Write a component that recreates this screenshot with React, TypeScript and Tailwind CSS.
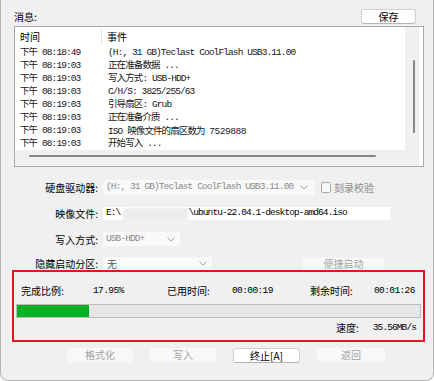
const mono = "font-['Liberation_Mono','Noto_Sans_CJK_SC',monospace]";

type LogRow = { time: string; event: React.ReactNode };

const ROWS: LogRow[] = [
  { time: "08:18:49", event: "(H:, 31 GB)Teclast CoolFlash USB3.11.00" },
  { time: "08:19:03", event: "正在准备数据 ..." },
  { time: "08:19:03", event: "写入方式: USB-HDD+" },
  { time: "08:19:03", event: "C/H/S: 3825/255/63" },
  { time: "08:19:03", event: "引导扇区: Grub" },
  { time: "08:19:03", event: "正在准备介质 ..." },
  {
    time: "08:19:03",
    event: (
      <>
        ISO 映像文件的扇区数为{" "}
        <span className="font-['Liberation_Sans',sans-serif] tracking-normal">7529888</span>
      </>
    ),
  },
  { time: "08:19:03", event: "开始写入 ..." },
];

function Chevron() {
  return (
    <svg width="8" height="5" viewBox="0 0 8 5" className="shrink-0">
      <polyline points="0.5,0.5 4,4 7.5,0.5" fill="none" stroke="#a0a0a0" strokeWidth="1" />
    </svg>
  );
}

function Label({ children }: { children: React.ReactNode }) {
  return <div className="w-[97px] shrink-0 text-right leading-[13px]">{children}</div>;
}

function Btn({ label, enabled, className = "" }: { label: string; enabled?: boolean; className?: string }) {
  return (
    <button
      type="button"
      className={`flex items-center justify-center rounded-[3px] leading-[12px] ${
        enabled
          ? "border border-[#d0d0d0] border-b-[#b5b5b5] bg-white text-black"
          : "bg-[#f8f8f8] text-[#a3a3a3]"
      } ${className}`}
    >
      {label}
    </button>
  );
}

export default function App() {
  return (
    <div className="h-[381px] w-[434px] overflow-hidden rounded-b-[8px] border-x border-b border-[#b4b4b4] bg-[#f0f0f0] font-['Noto_Sans_CJK_SC',sans-serif] text-[10px] text-black">
      {/* message header */}
      <div className="mt-[9px] flex h-[15px] items-center justify-between pl-[13px] pr-[17px]">
        <span className="leading-[12px]">消息:</span>
        <Btn label="保存" enabled className="h-[15px] w-[55px]" />
      </div>

      {/* log list */}
      <div className="ml-[13px] mt-[2px] flex h-[141px] w-[410px] border border-[#a9a9a9] bg-white">
        <div className="flex min-w-0 flex-1 flex-col">
          <div className="flex h-[19px] shrink-0 items-center">
            <div className="flex h-[17px] w-[87px] items-center border-r border-[#e3e3e3] pl-[5px] leading-[12px]">时间</div>
            <div className="pl-[5px] leading-[12px]">事件</div>
          </div>
          <div className={`flex-1 overflow-hidden text-[9.5px] tracking-[-0.9px] text-[#161616] ${mono}`}>
            {ROWS.map((row, i) => (
              <div key={i} className="flex h-[13px] items-center whitespace-nowrap leading-[13px]">
                <div className="w-[87px] shrink-0 pl-[5px]">下午 {row.time}</div>
                <div className="pl-[6px]">{row.event}</div>
              </div>
            ))}
          </div>
          <div className="relative h-[16px] shrink-0 bg-[#f0f0f0]">
            <div className="absolute left-[14px] top-[5px] h-[2px] w-[347px] rounded-full bg-[#868686]" />
          </div>
        </div>
        <div className="relative w-[14px] shrink-0 bg-[#f0f0f0]">
          <div className="absolute left-[8px] top-[33px] h-[73px] w-[2px] rounded-full bg-[#868686]" />
        </div>
        <div className="w-[4px] shrink-0" />
      </div>

      {/* settings */}
      <div className="mt-[13px] flex h-[15px] items-center gap-[5px]">
        <Label>硬盘驱动器:</Label>
        <div className={`flex h-[15px] w-[211px] items-center justify-between bg-[#f9f9f9] pl-[3px] pr-[6px] text-[9.5px] tracking-[-0.9px] text-[#8a8a8a] ${mono}`}>
          <span className="whitespace-nowrap">(H:, 31 GB)Teclast CoolFlash USB3.11.00</span>
          <Chevron />
        </div>
        <div className="ml-[2px] flex items-center gap-[3px] text-[#8c8c8c]">
          <span className="h-[11px] w-[10px] rounded-[2px] border border-[#a8a8a8] bg-[#f8f8f8]" />
          <span className="leading-[12px]">刻录校验</span>
        </div>
      </div>

      <div className="mt-[12px] flex h-[13px] items-center gap-[5px]">
        <Label>映像文件:</Label>
        <div className={`flex h-[13px] w-[287px] items-center bg-white pl-[3px] text-[9.5px] tracking-[-0.9px] ${mono}`}>
          <span>E:\</span>
          <span className="ml-[3px] h-[12px] w-[65px] bg-[#ececec] blur-[1px]" />
          <span className="whitespace-nowrap">\ubuntu-22.04.1-desktop-amd64.iso</span>
        </div>
      </div>

      <div className="mt-[12px] flex h-[14px] items-center gap-[5px]">
        <Label>写入方式:</Label>
        <div className={`flex h-[14px] w-[77px] items-center justify-between bg-[#f9f9f9] pl-[3px] pr-[5px] text-[9.5px] tracking-[-0.9px] text-[#8a8a8a] ${mono}`}>
          <span>USB-HDD+</span>
          <Chevron />
        </div>
      </div>

      <div className="mt-[11px] flex h-[13px] items-center gap-[5px]">
        <Label>隐藏启动分区:</Label>
        <div className="flex h-[13px] w-[109px] items-center justify-between bg-[#f9f9f9] pl-[4px] pr-[5px] text-[#5a5a5a]">
          <span className="leading-[12px]">无</span>
          <Chevron />
        </div>
        <Btn label="便捷启动" className="ml-[86px] h-[12px] w-[81px]" />
      </div>

      {/* progress */}
      <div className="ml-[11px] h-[72px] w-[413px] border-2 border-[#e5141f]">
        <div className="mt-[12px] flex h-[14px] items-center whitespace-nowrap leading-[12px]">
          <span className="w-[79px] shrink-0 pl-[7px]">完成比例:</span>
          <span className={`w-[74px] shrink-0 text-[9.5px] tracking-[-0.6px] ${mono}`}>17.95%</span>
          <span className="w-[65px] shrink-0">已用时间:</span>
          <span className={`w-[78px] shrink-0 text-[9.5px] tracking-[-0.6px] ${mono}`}>00:00:19</span>
          <span className="w-[64px] shrink-0">剩余时间:</span>
          <span className={`text-[9.5px] tracking-[-0.6px] ${mono}`}>00:01:26</span>
        </div>
        <div className="mx-[2px] mt-[6px] h-[14px] border border-[#bcbcbc] bg-[#e6e6e6]">
          <div className="h-full bg-[#06b025]" style={{ width: "17.95%" }} />
        </div>
        <div className="mt-[3px] flex h-[14px] items-center justify-end gap-[14px] pr-[7px] leading-[12px]">
          <span>速度:</span>
          <span className={`text-[9.5px] tracking-[-0.9px] ${mono}`}>35.56MB/s</span>
        </div>
      </div>

      {/* actions */}
      <div className="mt-[6px] flex gap-[17px] pl-[66px]">
        <Btn label="格式化" className="h-[14px] w-[66px]" />
        <Btn label="写入" className="h-[14px] w-[66px]" />
        <Btn label="终止[A]" enabled className="h-[15px] w-[67px]" />
        <Btn label="返回" className="h-[14px] w-[68px]" />
      </div>
    </div>
  );
}
